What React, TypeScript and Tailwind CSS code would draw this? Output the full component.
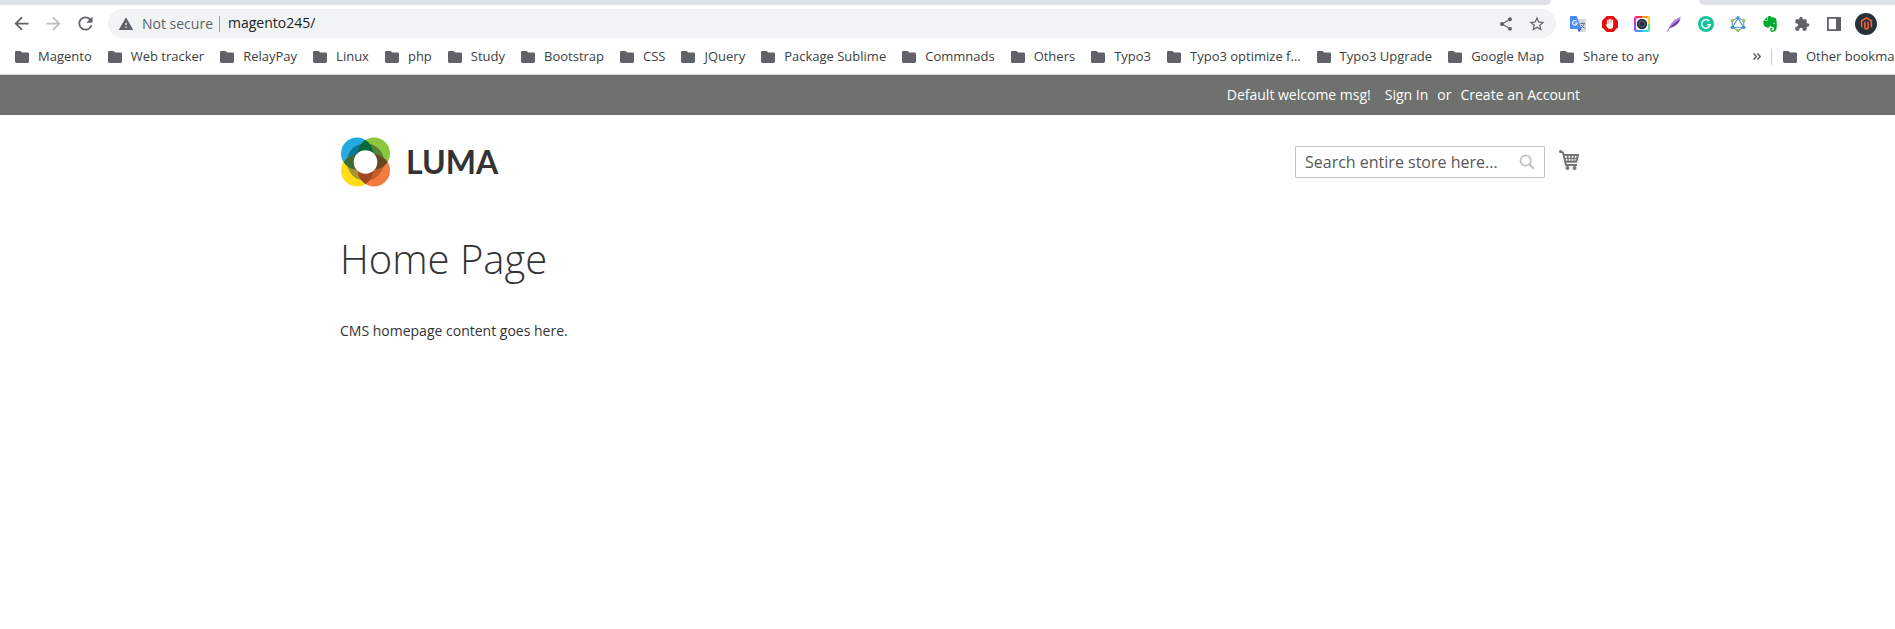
import React from "react";
import {
  MdArrowBack,
  MdArrowForward,
  MdExtension,
  MdRefresh,
  MdShare,
  MdStarBorder,
  MdWarning,
} from "react-icons/md";
import { FaMagento } from "react-icons/fa";
import { SiEvernote } from "react-icons/si";

const bookmarks = [
  "Magento",
  "Web tracker",
  "RelayPay",
  "Linux",
  "php",
  "Study",
  "Bootstrap",
  "CSS",
  "JQuery",
  "Package Sublime",
  "Commnads",
  "Others",
  "Typo3",
  "Typo3 optimize f…",
  "Typo3 Upgrade",
  "Google Map",
  "Share to any",
];

function FolderIcon() {
  return (
    <svg className="h-3 w-3.5 shrink-0" viewBox="0 0 14 12" fill="#5f6368" aria-hidden="true">
      <path d="M1.4 0H5.6L7.2 1.6H12.6A1.4 1.4 0 0 1 14 3V10.6A1.4 1.4 0 0 1 12.6 12H1.4A1.4 1.4 0 0 1 0 10.6V1.4A1.4 1.4 0 0 1 1.4 0Z" />
    </svg>
  );
}

function Bookmark({ label }: { label: string }) {
  return (
    <a href="#" className="flex shrink-0 items-center gap-[9px] whitespace-nowrap">
      <FolderIcon />
      {label}
    </a>
  );
}

function TranslateIcon() {
  return (
    <svg className="size-4" viewBox="0 0 16 16" aria-hidden="true">
      <path d="M5 3H15.2a.8.8 0 0 1 .8.8V15.200a.8.8 0 0 1-.8.8H9Z" fill="#d5d7da" />
      <path d="M10.500 7.500H15M12.500 6.500V7.500M14 7.800C13.500 10 12 11.500 10.500 12.300M11.300 9C12 10.500 13.300 11.600 14.600 12.200" stroke="#5f7f86" strokeWidth="1" fill="none" />
      <path d="M.8 0H6.600L11.500 13H.8A.8.8 0 0 1 0 12.200V.8A.8.8 0 0 1 .8 0Z" fill="#4a8af4" />
      <path d="M7.500 13H11.500L9 16Z" fill="#2a56c6" />
      <path d="M6.600 5.200A2.300 2.300 0 1 0 7.200 7H5" stroke="#fff" strokeWidth="1.100" fill="none" />
    </svg>
  );
}

function BlockerIcon() {
  return (
    <svg className="size-4" viewBox="0 0 16 16" aria-hidden="true">
      <path d="M4.700 0H11.300L16 4.700V11.300L11.300 16H4.700L0 11.300V4.700Z" fill="#e60f0f" />
      <path d="M5.600 8.500V4.600M7.200 7.500V3.300M8.900 7.500V3.300M10.500 8.500V4.500" stroke="#fff" strokeWidth="1.300" strokeLinecap="round" />
      <path d="M5 7.500H11.100V10C11.100 12 10 13 8.300 13C6.500 13 5.600 12.200 4.800 10.800L3.700 8.700L4.400 8.300L5 9Z" fill="#fff" />
    </svg>
  );
}

function CameraIcon() {
  return (
    <svg className="size-4" viewBox="0 0 16 16" aria-hidden="true">
      <defs>
        <clipPath id="camera-shape">
          <rect width="16" height="16" rx="2.500" />
        </clipPath>
      </defs>
      <g clipPath="url(#camera-shape)">
        <path d="M8 8L0 0H8Z" fill="#f0325a" />
        <path d="M8 8V0H16Z" fill="#ff9a1f" />
        <path d="M8 8L16 0V8Z" fill="#f7d21e" />
        <path d="M8 8V8H16V16Z" fill="#5fe08a" />
        <path d="M8 8L16 16H8Z" fill="#31d5ea" />
        <path d="M8 8V16H0Z" fill="#3f9cf5" />
        <path d="M8 8L0 16V8Z" fill="#a14df0" />
        <path d="M8 8H0V0Z" fill="#e52bc4" />
      </g>
      <rect x="2" y="2" width="12" height="12" rx="2.500" fill="#fff" />
      <circle cx="8" cy="8" r="5.200" fill="#24313f" />
      <circle cx="8" cy="8" r="3" fill="none" stroke="#6c7783" strokeWidth="0.700" />
    </svg>
  );
}

function FeatherIcon() {
  return (
    <svg className="size-4" viewBox="0 0 16 16" aria-hidden="true">
      <path d="M15 .5C10.500 2 6 5.500 4 9.500L3.200 12C7.500 11.500 12 8.500 13.500 4.500Z" fill="#b48ad6" />
      <path d="M14.500 3C11 5 6.500 8.500 3.200 12C7.500 11.500 12.500 8 14.500 3Z" fill="#6f3ba5" />
      <path d="M4 11L1.200 15.500" stroke="#8b55b8" strokeWidth="0.900" />
    </svg>
  );
}

function GrammarIcon() {
  return (
    <svg className="size-4" viewBox="0 0 16 16" aria-hidden="true">
      <circle cx="8" cy="8" r="8" fill="#15c39a" />
      <path d="M11.200 5A4.300 4.300 0 1 0 12.200 8.800H9.200" stroke="#fff" strokeWidth="1.400" fill="none" />
      <path d="M10.200 11.200L12.300 8.700" stroke="#fff" strokeWidth="1.200" />
    </svg>
  );
}

function GraphIcon() {
  return (
    <svg className="size-4" viewBox="0 0 16 16" aria-hidden="true">
      <path d="M8 1.500L13.800 4.700V11.300L8 14.500L2.200 11.300V4.700Z" fill="none" stroke="#55606a" strokeWidth="0.800" />
      <path d="M8 2L13.500 11.500H2.500Z" fill="none" stroke="#4a9bd6" strokeWidth="1.200" />
      <g fill="#3d93d3">
        <circle cx="8" cy="1.700" r="1.600" />
        <circle cx="2.200" cy="11.400" r="1.700" />
        <circle cx="13.800" cy="11.400" r="1.700" />
      </g>
      <g fill="#83c441">
        <circle cx="2.200" cy="4.600" r="1.500" />
        <circle cx="13.800" cy="4.600" r="1.500" />
        <circle cx="8" cy="14.500" r="1.500" />
      </g>
    </svg>
  );
}

function SidePanelIcon() {
  return (
    <svg className="size-4" viewBox="0 0 16 16" aria-hidden="true">
      <path fillRule="evenodd" d="M1 1H15V15H1ZM2.800 2.800V13.200H10V2.800Z" fill="#5f6368" />
    </svg>
  );
}

function LumaMark() {
  return (
    <svg className="size-[50px]" viewBox="0 0 50 50" aria-hidden="true">
      <defs>
        <clipPath id="petal-tl"><circle cx="17" cy="16.500" r="16" /></clipPath>
        <clipPath id="petal-tr"><circle cx="34" cy="16.500" r="16" /></clipPath>
        <clipPath id="petal-bl"><circle cx="17" cy="33.500" r="16" /></clipPath>
        <clipPath id="petal-br"><circle cx="34" cy="33.500" r="16" /></clipPath>
      </defs>
      <circle cx="17" cy="16.500" r="16" fill="#26a9e1" />
      <circle cx="34" cy="16.500" r="16" fill="#8cc63f" />
      <circle cx="17" cy="33.500" r="16" fill="#ffde17" />
      <circle cx="34" cy="33.500" r="16" fill="#f47b3e" />
      <circle cx="25.500" cy="25" r="18.600" fill="#0b7499" clipPath="url(#petal-tl)" />
      <circle cx="25.500" cy="25" r="18.600" fill="#568235" clipPath="url(#petal-tr)" />
      <circle cx="25.500" cy="25" r="18.600" fill="#a89232" clipPath="url(#petal-bl)" />
      <circle cx="25.500" cy="25" r="18.600" fill="#c05e2f" clipPath="url(#petal-br)" />
      <g clipPath="url(#petal-tl)">
        <circle cx="34" cy="16.500" r="16" fill="#006b38" />
        <circle cx="17" cy="33.500" r="16" fill="#3b6a33" />
      </g>
      <g clipPath="url(#petal-br)">
        <circle cx="17" cy="33.500" r="16" fill="#a04822" />
        <circle cx="34" cy="16.500" r="16" fill="#634a20" />
      </g>
      <circle cx="25.500" cy="25" r="11.800" fill="#fff" />
    </svg>
  );
}

function SearchIcon() {
  return (
    <svg className="size-4" viewBox="0 0 16 16" fill="none" stroke="#c2c2c2" aria-hidden="true">
      <circle cx="6.700" cy="6.500" r="5.200" strokeWidth="1.800" />
      <path d="M10.500 10.300L15 14.800" strokeWidth="2.200" />
    </svg>
  );
}

function CartIcon() {
  return (
    <svg className="size-5" viewBox="0 0 20 20" fill="none" stroke="#757575" aria-hidden="true">
      <circle cx="1.600" cy="1.600" r="1.600" fill="#757575" stroke="none" />
      <path d="M1.600 1.600L4 2.600L7 15H18" strokeWidth="2" />
      <path d="M4.500 5H19L17.300 11.800H6.300" strokeWidth="2" />
      <path d="M5 8.400H18.200M8.600 5L9.300 12M12 5V12M15.500 5L14.700 12" strokeWidth="1.400" />
      <circle cx="8.500" cy="18" r="2" fill="#757575" stroke="none" />
      <circle cx="15.500" cy="18" r="2" fill="#757575" stroke="none" />
    </svg>
  );
}

const extensions = [
  { name: "Translate", icon: <TranslateIcon /> },
  { name: "Ad blocker", icon: <BlockerIcon /> },
  { name: "Screen capture", icon: <CameraIcon /> },
  { name: "Feather", icon: <FeatherIcon /> },
  { name: "Grammar", icon: <GrammarIcon /> },
  { name: "GraphQL", icon: <GraphIcon /> },
  { name: "Notes", icon: <SiEvernote className="size-4 text-[#00a82d]" /> },
  { name: "Extensions", icon: <MdExtension className="size-4 text-[#5f6368]" /> },
  { name: "Side panel", icon: <SidePanelIcon /> },
];

function BrowserChrome() {
  return (
    <header className="border-b border-[#d5d7d9] bg-white">
      <div className="flex h-[5px]">
        <div className="flex-1 rounded-br-[5px] bg-[#dee1e6]" />
        <div className="w-[148px]" />
        <div className="w-[221px] rounded-bl-[5px] bg-[#dee1e6]" />
      </div>
      <div className="flex items-center pt-1 pr-[43px] pl-[11px]">
        <nav aria-label="History" className="flex gap-[11px] text-[21px] text-[#5f6368]">
          <button type="button" aria-label="Back"><MdArrowBack /></button>
          <button type="button" aria-label="Forward" className="text-[#babcbe]"><MdArrowForward /></button>
          <button type="button" aria-label="Reload"><MdRefresh /></button>
        </nav>
        <div className="ml-3 flex h-[29px] flex-1 items-center rounded-full bg-[#f1f3f4] px-[10px] text-[14px] text-[#5f6368]">
          <MdWarning className="size-4" />
          <span className="ml-2 border-r border-[#9aa0a6] pr-1.5 leading-4">Not secure</span>
          <label className="flex-1">
            <span className="sr-only">Address</span>
            <input type="text" defaultValue="magento245/" className="block h-6 w-full bg-transparent px-2 pb-0.5 text-[#202124] outline-none" />
          </label>
          <button type="button" aria-label="Share" className="mr-[14px]"><MdShare className="size-4" /></button>
          <button type="button" aria-label="Bookmark this page"><MdStarBorder className="size-[18px]" /></button>
        </div>
        <div className="ml-[14px] flex items-center gap-4">
          {extensions.map((e) => (
            <button key={e.name} type="button" aria-label={e.name}>{e.icon}</button>
          ))}
        </div>
        <button type="button" aria-label="Profile" className="ml-[13px] flex size-[22px] items-center justify-center rounded-full bg-[#263238]">
          <FaMagento className="size-[13px] text-[#f1613a]" />
        </button>
      </div>
      <nav aria-label="Bookmarks" className="flex h-9 items-center pt-px pl-[15px] text-[13px] text-[#3c4043]">
        <div className="flex min-w-0 flex-1 gap-4 overflow-hidden">
          {bookmarks.map((b) => (
            <Bookmark key={b} label={b} />
          ))}
        </div>
        <div className="flex w-[167px] shrink-0 items-center">
          <button type="button" aria-label="More bookmarks">
            <svg className="h-[7px] w-2" viewBox="0 0 8 7" fill="none" stroke="#5f6368" strokeWidth="1.500" aria-hidden="true">
              <path d="M.6 .5L3.400 3.500L.6 6.500M4.400 .5L7.200 3.500L4.400 6.500" />
            </svg>
          </button>
          <span className="mr-[11px] ml-[10px] h-4 w-px bg-[#c8cacc]" />
          <Bookmark label="Other bookmarks" />
        </div>
      </nav>
    </header>
  );
}

export default function App() {
  return (
    <div className="min-h-screen overflow-hidden bg-white font-['Open_Sans','Noto_Sans',sans-serif]">
      <div className="w-[calc(100%+25px)]">
        <BrowserChrome />

        <div className="bg-[#6e716e] px-5">
          <div className="mx-auto flex h-10 max-w-[1240px] items-center justify-end pb-0.5 text-[14px] text-white">
            <span className="mr-[14px]">Default welcome msg!</span>
            <a href="#">Sign In</a>
            <span className="mx-[9px]">or</span>
            <a href="#">Create an Account</a>
          </div>
        </div>

        <div className="px-5">
          <div className="mx-auto max-w-[1240px]">
            <div className="flex items-start justify-between pt-[22px]">
              <a href="#" className="flex items-center gap-4 font-['Lato',sans-serif] text-[32px] leading-none font-bold text-[#333333]">
                <LumaMark />
                LUMA
              </a>
              <div className="flex items-start gap-[14px] pt-[9px] pr-px">
                <form className="flex h-8 w-[250px] items-center rounded-[1px] border border-[#c2c2c2] px-[9px]">
                  <label htmlFor="search" className="sr-only">Search</label>
                  <input
                    id="search"
                    type="text"
                    placeholder="Search entire store here..."
                    className="h-7 min-w-0 flex-1 bg-transparent text-[16px] outline-none placeholder:text-[#575757]"
                  />
                  <button type="button" aria-label="Search"><SearchIcon /></button>
                </form>
                <a href="#" aria-label="My Cart" className="pt-1"><CartIcon /></a>
              </div>
            </div>

            <main className="text-[#333333]">
              <h1 className="pt-[50px] text-[40px] leading-[44px] font-light">Home Page</h1>
              <p className="pt-[40px] text-[14px] leading-5">CMS homepage content goes here.</p>
            </main>
          </div>
        </div>
      </div>
    </div>
  );
}
